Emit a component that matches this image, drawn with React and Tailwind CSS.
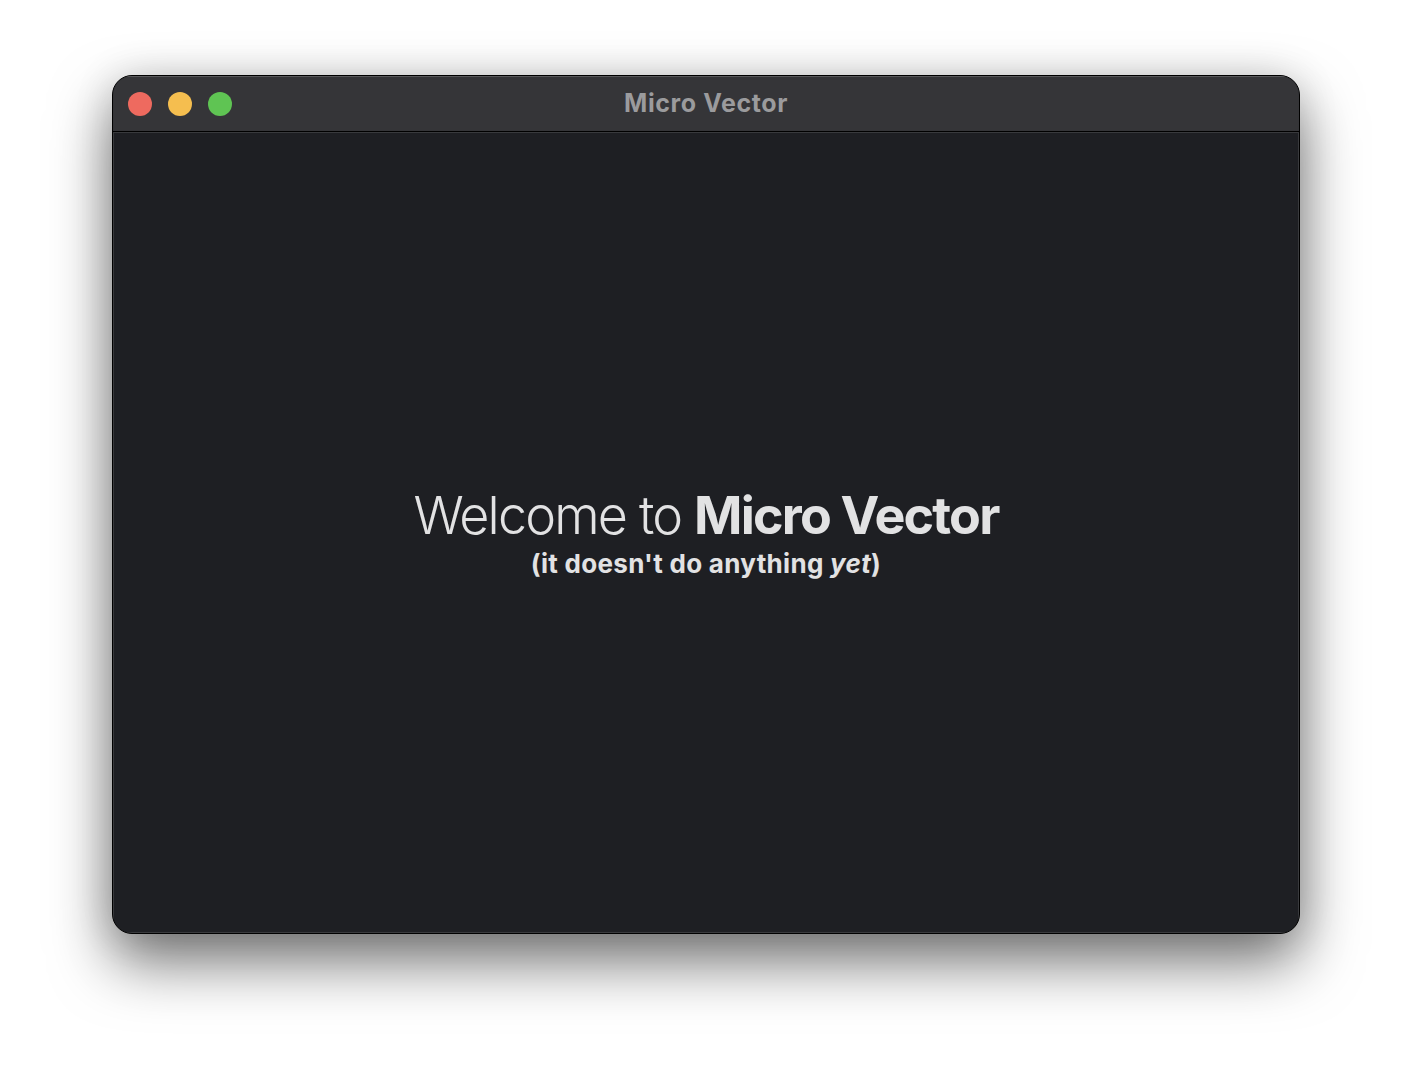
export default function App() {
    return (
        <div className="min-h-screen w-full bg-white pl-[112px] pt-[75px] font-['Inter',sans-serif]">
            <div className="w-[1188px] h-[859px] rounded-[20px] bg-[#1e1f23] border border-black shadow-[0_28px_60px_rgba(0,0,0,0.55),0_0_40px_rgba(0,0,0,0.12)] overflow-hidden flex flex-col">
                <div className="h-[56px] shrink-0 bg-[#353538] border-b border-black relative flex items-center justify-center shadow-[inset_0_1px_0_rgba(255,255,255,0.18)]">
                    <div className="absolute left-[15px] top-1/2 -translate-y-1/2 flex gap-[16px]">
                        <span className="w-6 h-6 rounded-full bg-[#ee6a5f]" />
                        <span className="w-6 h-6 rounded-full bg-[#f5be4f]" />
                        <span className="w-6 h-6 rounded-full bg-[#5fc453]" />
                    </div>
                    <h1 className="text-[25px] font-bold text-[#9b9b9d] tracking-[0.6px]">Micro Vector</h1>
                </div>
                <div className="flex-1 flex flex-col items-center justify-center text-[#e2e2e3] shadow-[inset_0_0_0_1px_rgba(255,255,255,0.12)]">
                    <h2 className="text-[52px] leading-[60px] font-light tracking-[-1.8px]">
                        Welcome to <span className="font-bold">Micro Vector</span>
                    </h2>
                    <p className="text-[26px] leading-[32px] font-bold tracking-[0.3px] mt-[2px]">
                        (it doesn't do anything <em>yet</em>)
                    </p>
                </div>
            </div>
        </div>
    );
}
